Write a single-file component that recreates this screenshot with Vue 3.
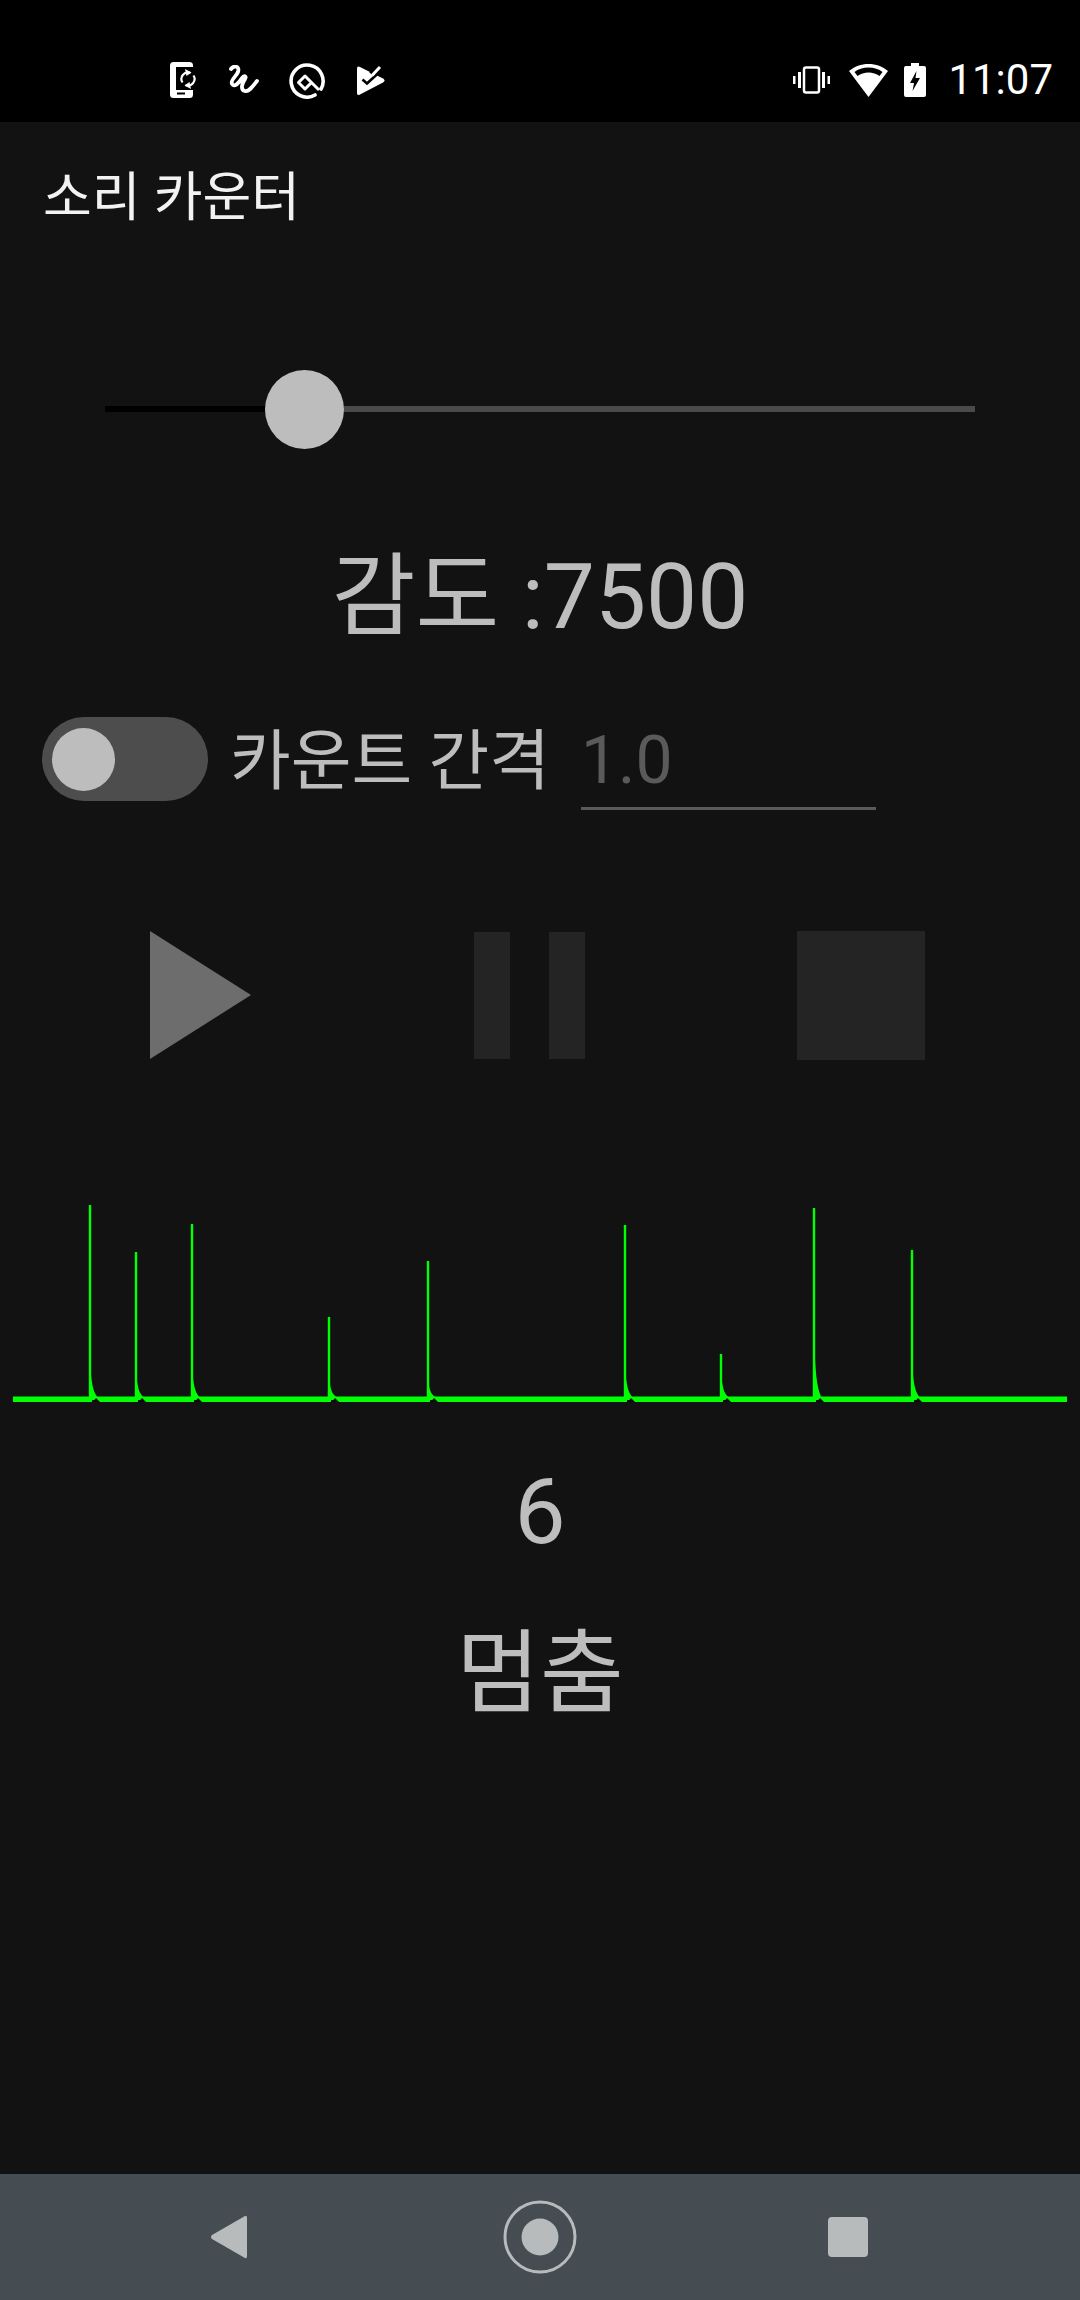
<template>
  <div class="screen">
    <div class="status-bar">
      <div class="status-left">
        <svg class="ic" width="27" height="36" viewBox="0 0 27 36">
          <rect width="23" height="36" rx="3.500" fill="#fff" />
          <rect x="6" y="5" width="21" height="23" fill="#000" />
          <rect x="7" y="30.500" width="8" height="2" fill="#000" />
          <path fill="none" stroke="#fff" stroke-width="2.200" d="M12.500 20.500a6.500 6.500 0 0 1 8-9.500M23.500 13.500a6.500 6.500 0 0 1-8 9.500" />
          <path fill="#fff" d="M15 7l6.500 3.500-5 3.500zM21 27l-6.500-3.500 5-3.500z" />
        </svg>
        <svg class="ic sq" width="30" height="30" viewBox="0 0 30 30">
          <path fill="none" stroke="#fff" stroke-width="3.800" stroke-linecap="round" stroke-linejoin="round" d="M2 4C5 0 11 1 9 7 7 12 1 15 3 19c2 4 7-1 10-6 2-3 5-2 3 1-3 4-5 11 0 12 4 1 8-5 12-10" />
        </svg>
        <svg class="ic q" width="37" height="37" viewBox="0 0 37 37">
          <path fill="none" stroke="#fff" stroke-width="3.600" stroke-linecap="round" d="M32 27A16 16 0 1 0 26 33" />
          <path fill="none" stroke="#fff" stroke-width="3" stroke-linejoin="round" d="M30 28L16 14l-6.500 6.500L16 27l6.500-6.500" />
        </svg>
        <svg class="ic pl" width="28" height="31" viewBox="0 0 28 31">
          <path fill="#fff" d="M0 3.500q0-3 3-1.500L26 13.500q3 2 0 4L3 29.500q-3 1.500-3-1.500z" />
          <path fill="none" stroke="#000" stroke-width="2.600" d="M5.500 14.500L10 18.500 22 7.500" />
          <path fill="none" stroke="#000" stroke-width="5" d="M14 9L21 2" />
          <path fill="none" stroke="#fff" stroke-width="3" d="M15 10.500L23 2" />
        </svg>
      </div>
      <div class="status-right">
        <svg class="ic vib" width="37" height="28" viewBox="0 0 37 28">
          <rect x="11" y="1.500" width="15" height="25" rx="2" fill="none" stroke="#fff" stroke-width="2.500" />
          <path fill="#fff" d="M5 6h3v16H5zM29 6h3v16h-3zM0 10h2.500v8H0zM34.500 10H37v8h-2.500z" />
        </svg>
        <svg class="ic wifi" width="39" height="33" viewBox="0 0 39 33">
          <path fill="#fff" d="M19.500 0C12 0 5.500 2.500 0 7l19.500 26L39 7C33.500 2.500 27 0 19.500 0zm0 3.500c5.500 0 10.500 1.500 14 4.500l-3 4c-3-2-7-3.500-11-3.500S11.500 10 8.500 12l-3-4c3.500-3 8.500-4.500 14-4.500z" />
        </svg>
        <svg class="ic batt" width="22" height="34" viewBox="0 0 22 34">
          <path fill="#fff" d="M7 0h8v3h5a2 2 0 0 1 2 2v27a2 2 0 0 1-2 2H2a2 2 0 0 1-2-2V5a2 2 0 0 1 2-2h5z" />
          <path fill="#000" d="M12.500 8L6 20h4l-1.500 8L16 15h-4.500z" />
        </svg>
        <span class="clock">11:07</span>
      </div>
    </div>

    <div class="content">
      <div class="app-title">소리 카운터</div>

      <div class="slider">
        <div class="track-done"></div>
        <div class="slider-thumb"></div>
        <div class="track-rest"></div>
      </div>

      <div class="big-text sensitivity">감도 :7500</div>

      <div class="interval-row">
        <div class="toggle"><div class="toggle-thumb"></div></div>
        <span class="interval-label">카운트 간격</span>
        <div class="interval-input"><span>1.0</span></div>
      </div>

      <div class="controls">
        <div class="play"></div>
        <div class="pause"><span></span><span></span></div>
        <div class="stop"></div>
      </div>

      <svg class="wave" width="1080" height="230" viewBox="0 1190 1080 230">
        <rect x="13" y="1397.500" width="1054" height="5.500" fill="#0f0" />
        <g v-for="p in peaks" :key="p.x">
          <path :d="`M${p.x + 2} 1403h8l-6 -6h-2z`" fill="#0b0b0b" />
          <path :d="`M${p.x - 1.2} ${p.top}h2.400v${1398 - p.top - p.tail}c1 ${p.tail * 0.6} 3 ${p.tail * 0.8} 6 ${p.tail}l-3 3h-5.400z`" fill="#0f0" />
        </g>
      </svg>

      <div class="big-text count">6</div>
      <div class="big-text state">멈춤</div>
    </div>

    <div class="nav-bar">
      <svg width="38" height="44" viewBox="0 0 38 44">
        <path fill="#b7bbbc" d="M35 1q2-1 2 2v38q0 3-2 2L2 24q-2-2 0-4z" />
      </svg>
      <svg width="74" height="74" viewBox="0 0 74 74">
        <circle cx="37" cy="37" r="35" fill="none" stroke="#b7bbbc" stroke-width="3" />
        <circle cx="37" cy="37" r="18.500" fill="#b7bbbc" />
      </svg>
      <div class="nav-square"></div>
    </div>
  </div>
</template>

<script setup>
// sound wave spikes, tail = height of the little decay after each hit
const peaks = [
  { x: 90, top: 1206, tail: 22 },
  { x: 136, top: 1253, tail: 16 },
  { x: 192, top: 1225, tail: 19 },
  { x: 329, top: 1318, tail: 12 },
  { x: 428, top: 1262, tail: 11 },
  { x: 625, top: 1226, tail: 19 },
  { x: 721, top: 1355, tail: 15 },
  { x: 814, top: 1209, tail: 38 },
  { x: 912, top: 1251, tail: 22 },
];
</script>

<style>
html,
body {
  margin: 0;
  background: #121212;
}
</style>

<style scoped>
.screen {
  width: 1080px;
  height: 2300px;
  display: flex;
  flex-direction: column;
  background: #121212;
  color: #bdbdbd;
  font-family: Roboto, "Noto Sans CJK KR", sans-serif;
  overflow: hidden;
}

.status-bar {
  height: 122px;
  flex: none;
  background: #000;
  display: flex;
  align-items: center;
  justify-content: space-between;
  padding: 38px 27px 0 170px;
  box-sizing: border-box;
}

.status-left,
.status-right {
  display: flex;
  align-items: center;
}

.status-left {
  gap: 31px;
}

.sq {
  margin-left: 1px;
}

.q {
  margin-left: -1px;
}

.status-right {
  gap: 19px;
}

.batt {
  margin-left: -3px;
}

.clock {
  color: #fff;
  font-size: 42px;
  line-height: 50px;
  margin-left: 3px;
}

.content {
  flex: 1;
  display: flex;
  flex-direction: column;
}

.app-title {
  color: #f2f2f2;
  font-size: 53px;
  line-height: 70px;
  padding: 41px 0 0 43px;
}

.slider {
  display: flex;
  align-items: center;
  margin: 136px 105px 0;
  height: 80px;
}

.track-done {
  width: 160px;
  height: 6px;
  background: #000;
}

.slider-thumb {
  width: 79px;
  height: 79px;
  border-radius: 50%;
  background: #bdbdbd;
}

.track-rest {
  flex: 1;
  height: 6px;
  background: #4a4a4a;
}

.big-text {
  text-align: center;
  font-size: 91px;
  line-height: 108px;
}

.sensitivity {
  margin-top: 94px;
}

.interval-row {
  display: flex;
  align-items: center;
  margin: 66px 0 0 42px;
  height: 84px;
}

.toggle {
  width: 166px;
  height: 84px;
  border-radius: 42px;
  background: #4d4d4d;
  display: flex;
  align-items: center;
  padding-left: 10px;
  box-sizing: border-box;
}

.toggle-thumb {
  width: 63px;
  height: 63px;
  border-radius: 50%;
  background: #bdbdbd;
}

.interval-label {
  margin-left: 22px;
  margin-top: 6px;
  font-size: 66px;
  line-height: 84px;
}

.interval-input {
  width: 295px;
  margin-left: 31px;
  height: 90px;
  line-height: 82px;
  font-size: 66px;
  color: #5a5a5a;
  border-bottom: 3px solid #5a5a5a;
  box-sizing: border-box;
  margin-top: 12px;
}

.controls {
  display: flex;
  align-items: center;
  margin-top: 129px;
  height: 130px;
  padding-left: 150px;
}

.play {
  width: 0;
  height: 0;
  border-left: 101px solid #6d6d6d;
  border-top: 64px solid transparent;
  border-bottom: 64px solid transparent;
}

.pause {
  display: flex;
  gap: 39px;
  margin-left: 223px;
}

.pause span {
  width: 36px;
  height: 127px;
  background: #242424;
}

.stop {
  width: 128px;
  height: 129px;
  background: #242424;
  margin-left: 212px;
}

.wave {
  display: block;
  margin-top: 129px;
  flex: none;
}

.count {
  margin-top: 39px;
}

.state {
  margin-top: 54px;
}

.nav-bar {
  height: 126px;
  flex: none;
  margin-top: auto;
  background: #454c52;
  display: flex;
  align-items: center;
  padding-left: 210px;
  box-sizing: border-box;
}

.nav-bar svg:nth-child(2) {
  margin-left: 255px;
}

.nav-square {
  width: 40px;
  height: 40px;
  border-radius: 4px;
  background: #b7bbbc;
  margin-left: 251px;
}
</style>
